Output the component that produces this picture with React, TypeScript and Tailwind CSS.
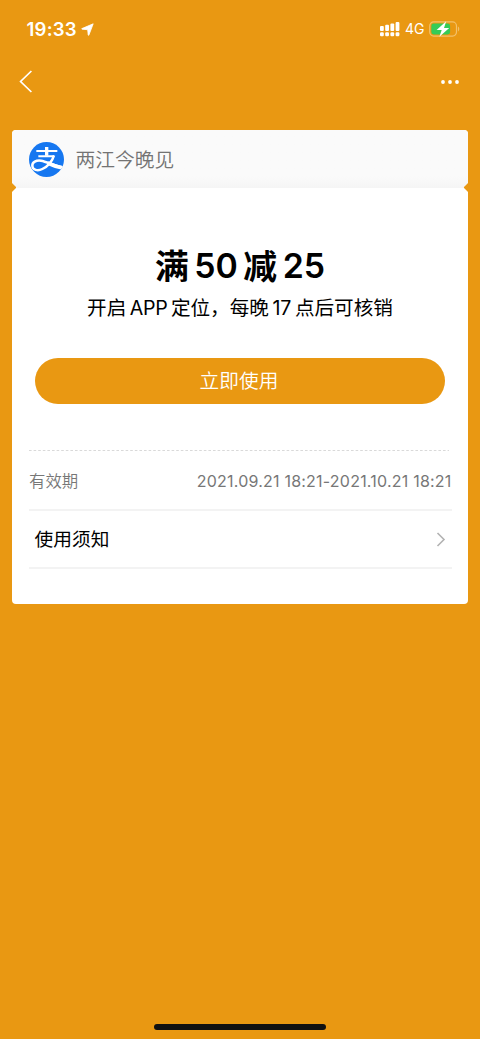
const SIGNAL_BARS = [
  { x: 0, height: 5 },
  { x: 5.2, height: 6.2 },
  { x: 10.4, height: 7.6 },
  { x: 15.6, height: 9 },
];

function StatusBar() {
  return (
    <div className="flex h-[58px] items-center justify-between pl-[26.5px] pr-[20px] text-white">
      <div className="flex items-center">
        <span className="w-[51px] whitespace-nowrap text-[18.6px] leading-6 font-semibold tracking-[0.2px]">19:33</span>
        <svg viewBox="0 0 13 13" className="ml-[3px] h-[13px] w-[13px]" fill="currentColor" stroke="currentColor" strokeWidth=".8" strokeLinejoin="round">
          <path d="M12.2.8.9 5.6c-.3.2-.3.5.1.6l5.7.5.5 5.3c.1.5.5.5.7.1L12.2.8Z" />
        </svg>
      </div>
      <div className="flex items-center">
        <svg viewBox="0 0 20 16" className="h-4 w-5" fill="currentColor">
          {SIGNAL_BARS.map((bar) => (
            <g key={bar.x}>
              <rect x={bar.x} y={10 - bar.height} width="3.8" height={bar.height} rx="1" />
              <rect x={bar.x} y="11.3" width="3.8" height="4" rx="1.2" />
            </g>
          ))}
        </svg>
        <span className="ml-[5.5px] w-[19px] whitespace-nowrap text-[14px] leading-5">4G</span>
        <svg viewBox="0 0 31 16" className="ml-[5px] h-4 w-[31px]">
          <rect x=".7" y=".9" width="26.8" height="14.2" rx="4" fill="none" stroke="#f3c06a" strokeWidth="1.2" />
          <rect x="2.3" y="2.6" width="18.8" height="10.8" rx="2.4" fill="#35cb57" />
          <path d="M29 5.6v4.8c1.7-.7 1.7-4.1 0-4.8Z" fill="#f3c06a" />
          <path d="M17.2 .2 7.6 8.9h5.1l-2.3 6.9 9.8-8.8h-5.2l2.2-6.8Z" fill="#fff" />
        </svg>
      </div>
    </div>
  );
}

function NavBar() {
  return (
    <div className="flex h-[72px] items-start justify-between pt-[12px] pl-[19px] pr-[20px] text-white">
      <svg viewBox="0 0 14 23" className="h-[23px] w-[14px]" fill="none" stroke="currentColor" strokeWidth="1.7">
        <path d="M12.4 1 1.6 11.5 12.4 22" />
      </svg>
      <svg viewBox="0 0 18 4" className="mt-[9.5px] mr-[1px] h-1 w-[18px]" fill="currentColor">
        <circle cx="2" cy="2" r="1.9" />
        <circle cx="9" cy="2" r="1.9" />
        <circle cx="16" cy="2" r="1.9" />
      </svg>
    </div>
  );
}

function AlipayLogo() {
  return (
    <svg viewBox="0 0 105 105" className="h-[35px] w-[35px]">
      <defs>
        <clipPath id="disc">
          <circle cx="52.5" cy="52.5" r="52.5" />
        </clipPath>
      </defs>
      <circle cx="52.5" cy="52.5" r="52.5" fill="#1677f0" />
      <g clipPath="url(#disc)" fill="none" stroke="#fff">
        <path d="M53 15v26" strokeWidth="10" />
        <path d="M22 27h63" strokeWidth="6" />
        <path d="M28 43h47" strokeWidth="6" />
        <path d="M75 40C70 57 56 73 40 81 26 88 11 84 10 72 9 60 22 54 36 56c18 3 36 14 64 20" strokeWidth="7.5" />
        <path d="M56 63c12 6 25 11 48 16" strokeWidth="11" />
      </g>
    </svg>
  );
}

export default function App() {
  return (
    <div className="flex h-[1039px] w-[480px] flex-col overflow-hidden bg-[#e99812] font-['Inter','Noto_Sans_CJK_SC',sans-serif]">
      <StatusBar />
      <NavBar />

      <main className="relative mx-[11.6px] h-[473.5px] w-[456.8px] overflow-hidden rounded-[4px] bg-white">
        <header className="flex h-[58px] items-center bg-linear-to-b from-[#fafafa] from-80% to-[#f5f5f5] pl-[17.4px]">
          <AlipayLogo />
          <h1 className="ml-[11.5px] pt-[2px] text-[19.8px] leading-7 font-[350] text-[#737373]">两江今晚见</h1>
        </header>
        <i className="absolute top-[54px] -left-[4px] size-[7px] rotate-45 rounded-[1px] bg-[#e99812]" />
        <i className="absolute top-[54px] -right-[4px] size-[7px] rotate-45 rounded-[1px] bg-[#e99812]" />

        <section className="flex flex-col items-center pt-[56px]">
          <h2 className="flex h-[44px] items-center gap-[5.5px] whitespace-nowrap text-[33.8px] leading-[44px] font-semibold text-black">
            <span className="pt-[2px] font-bold">满</span>
            <span>50</span>
            <span className="pt-[2px] font-bold">减</span>
            <span>25</span>
          </h2>
          <p className="flex h-[28px] items-center gap-[3.5px] whitespace-nowrap pt-[12px] text-[19.6px] leading-7 text-black">
            <span>开启</span>
            <span className="tracking-[-0.3px]">APP</span>
            <span>定位，每晚</span>
            <span>17</span>
            <span>点后可核销</span>
          </p>
          <button className="mt-[42px] h-[46px] w-[410px] rounded-full bg-[#e99812] pt-[2px] pr-[2px] text-[19.7px] font-[350] text-white">
            立即使用
          </button>
        </section>

        <svg className="mt-[46px] ml-[17px] block h-[1px] w-[420px]" viewBox="0 0 420 1">
          <path d="M0 .5h420" stroke="#d9d9d9" strokeDasharray="2.6 2" />
        </svg>
        <section className="ml-[17px] w-[423px]">
          <div className="flex h-[60px] items-center justify-between border-b-2 border-[#f3f3f3] pt-[2px] text-[#777]">
            <span className="pl-[0.5px] text-[16.4px] font-[350]">有效期</span>
            <span className="whitespace-nowrap text-[16px] tracking-[0.22px]">2021.09.21 18:21-2021.10.21 18:21</span>
          </div>
          <div className="flex h-[58px] items-center justify-between border-b-2 border-[#f3f3f3] pr-[6px] pl-[6px]">
            <span className="pt-[2px] text-[18.7px] text-black">使用须知</span>
            <svg viewBox="0 0 10 15" className="h-[15px] w-[10px]" fill="none" stroke="#b2b2b2" strokeWidth="1.6">
              <path d="M1.5 1 8 7.5 1.5 14" />
            </svg>
          </div>
        </section>
      </main>

      <div className="mx-auto mt-auto mb-[9px] h-[6px] w-[172px] rounded-full bg-[#111]" />
    </div>
  );
}
